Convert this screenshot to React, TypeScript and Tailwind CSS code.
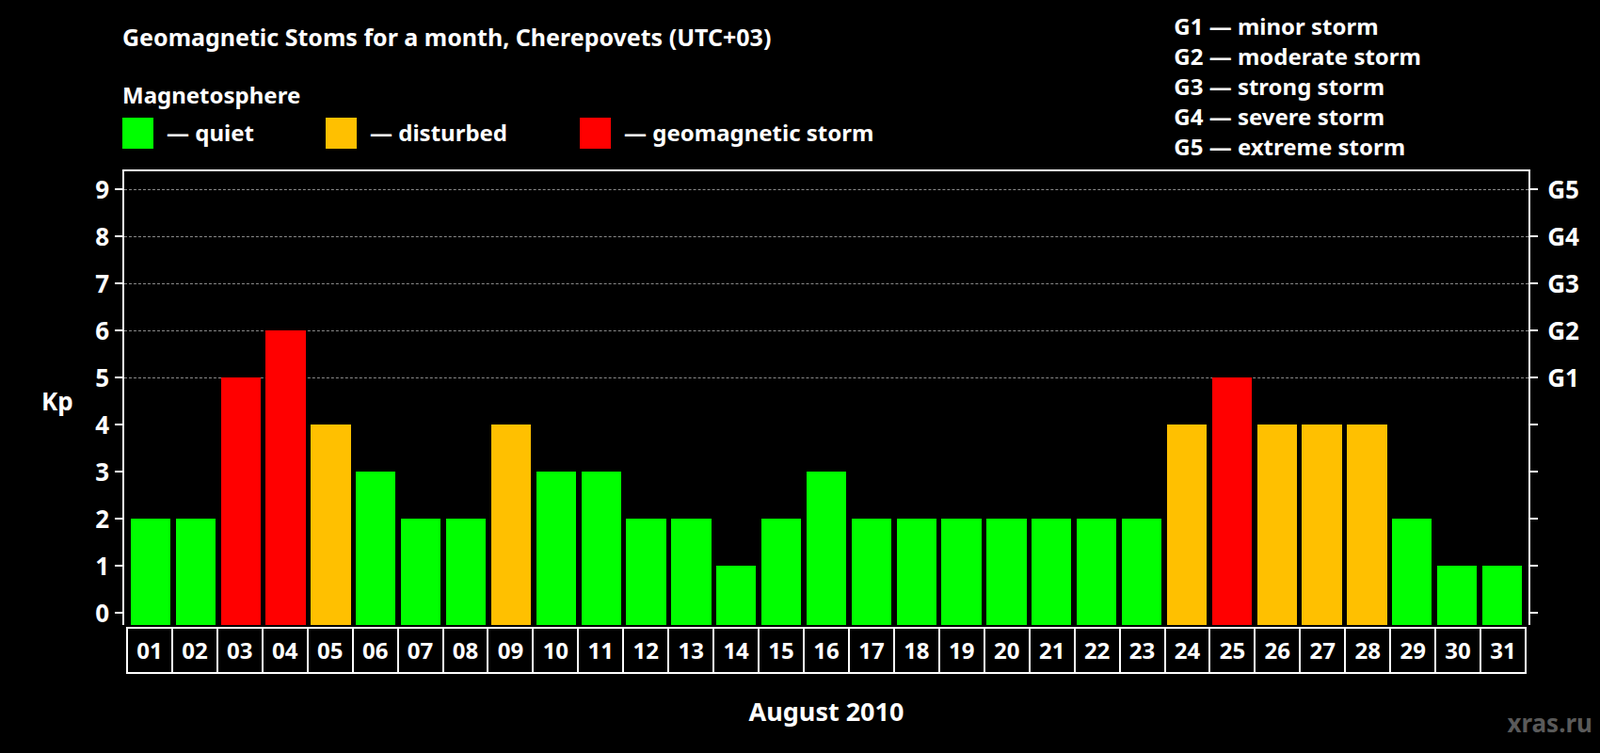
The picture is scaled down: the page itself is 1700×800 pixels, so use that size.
const kp = [2, 2, 5, 6, 4, 3, 2, 2, 4, 3, 3, 2, 2, 1, 2, 3, 2, 2, 2, 2, 2, 2, 2, 4, 5, 4, 4, 4, 2, 1, 1]
const levels = [0, 1, 2, 3, 4, 5, 6, 7, 8, 9]
const storms: Record<number, string> = { 5: 'G1', 6: 'G2', 7: 'G3', 8: 'G4', 9: 'G5' }
const UNIT = 50
const ZERO = 469 // y of Kp 0 inside the plot frame

function barColor(v: number) {
  if (v >= 5) return 'bg-[#ff0000]'
  if (v === 4) return 'bg-[#ffc000]'
  return 'bg-[#00ff00]'
}

export default function App() {
  return (
    <div className="min-h-screen bg-black [font-family:'Liberation_Sans',Arial,sans-serif] font-bold text-white">
      <div className="relative h-[800px] w-[1700px]">
        {/* header */}
        <div className="flex justify-between pl-[130px] pr-[190px] pt-[24px]">
          <div>
            <div className="text-[25px] leading-[30px]">Geomagnetic Stoms for a month, Cherepovets (UTC+03)</div>
            <div className="mt-[32px] text-[24px] leading-[30px]">Magnetosphere</div>
            <div className="mt-[7px] flex items-center text-[24px]">
              <span className="h-[33px] w-[33px] bg-[#00ff00]" />
              <span className="ml-[14px] w-[169px]">— quiet</span>
              <span className="h-[33px] w-[33px] bg-[#ffc000]" />
              <span className="ml-[14px] w-[223px]">— disturbed</span>
              <span className="h-[33px] w-[33px] bg-[#ff0000]" />
              <span className="ml-[14px]">— geomagnetic storm</span>
            </div>
          </div>
          <div className="-mt-[12px] text-[24px] leading-[32px]">
            <div>G1 — minor storm</div>
            <div>G2 — moderate storm</div>
            <div>G3 — strong storm</div>
            <div>G4 — severe storm</div>
            <div>G5 — extreme storm</div>
          </div>
        </div>

        {/* plot */}
        <div className="relative ml-[130px] mt-[8px] h-[484px] w-[1496px] border-x-2 border-t-2 border-white">
          {levels.map((k) => (
            <div key={k}>
              {k >= 5 && (
                <div
                  className="absolute left-0 right-0 border-t border-dashed border-[#8a8a8a]"
                  style={{ top: ZERO - k * UNIT }}
                />
              )}
              <div className="absolute -left-[10px] h-[2px] w-[8px] bg-white" style={{ top: ZERO - k * UNIT - 1 }} />
              <div className="absolute -right-[10px] h-[2px] w-[8px] bg-white" style={{ top: ZERO - k * UNIT - 1 }} />
              <div
                className="absolute -left-[44px] w-[28px] text-right text-[26px] leading-[30px]"
                style={{ top: ZERO - k * UNIT - 15 }}
              >
                {k}
              </div>
              {storms[k] && (
                <div className="absolute -right-[54px] text-[26px] leading-[30px]" style={{ top: ZERO - k * UNIT - 15 }}>
                  {storms[k]}
                </div>
              )}
            </div>
          ))}
          <div className="absolute -left-[88px] text-[26px] leading-[30px]" style={{ top: ZERO - 4.5 * UNIT - 15 }}>
            Kp
          </div>
          <div className="absolute inset-x-[2px] bottom-0 grid h-full grid-cols-[repeat(31,minmax(0,1fr))] items-end px-[2px]">
            {kp.map((v, i) => (
              <div key={i} className="px-[2.8px]">
                <div className={barColor(v)} style={{ height: v * UNIT + 13 }} />
              </div>
            ))}
          </div>
        </div>

        {/* days */}
        <div className="ml-[134px] mt-[2px] grid h-[50px] w-[1488px] grid-cols-[repeat(31,minmax(0,1fr))] border-y-2 border-r-2 border-white">
          {kp.map((_, i) => (
            <div key={i} className="flex items-center justify-center border-l-2 border-white text-[24px]">
              {String(i + 1).padStart(2, '0')}
            </div>
          ))}
        </div>

        <div className="mt-[20px] w-[1756px] text-center text-[27px]">August 2010</div>
        <div className="absolute bottom-[12px] right-[8px] text-[26px] text-[#5a5a5a]">xras.ru</div>
      </div>
    </div>
  )
}
